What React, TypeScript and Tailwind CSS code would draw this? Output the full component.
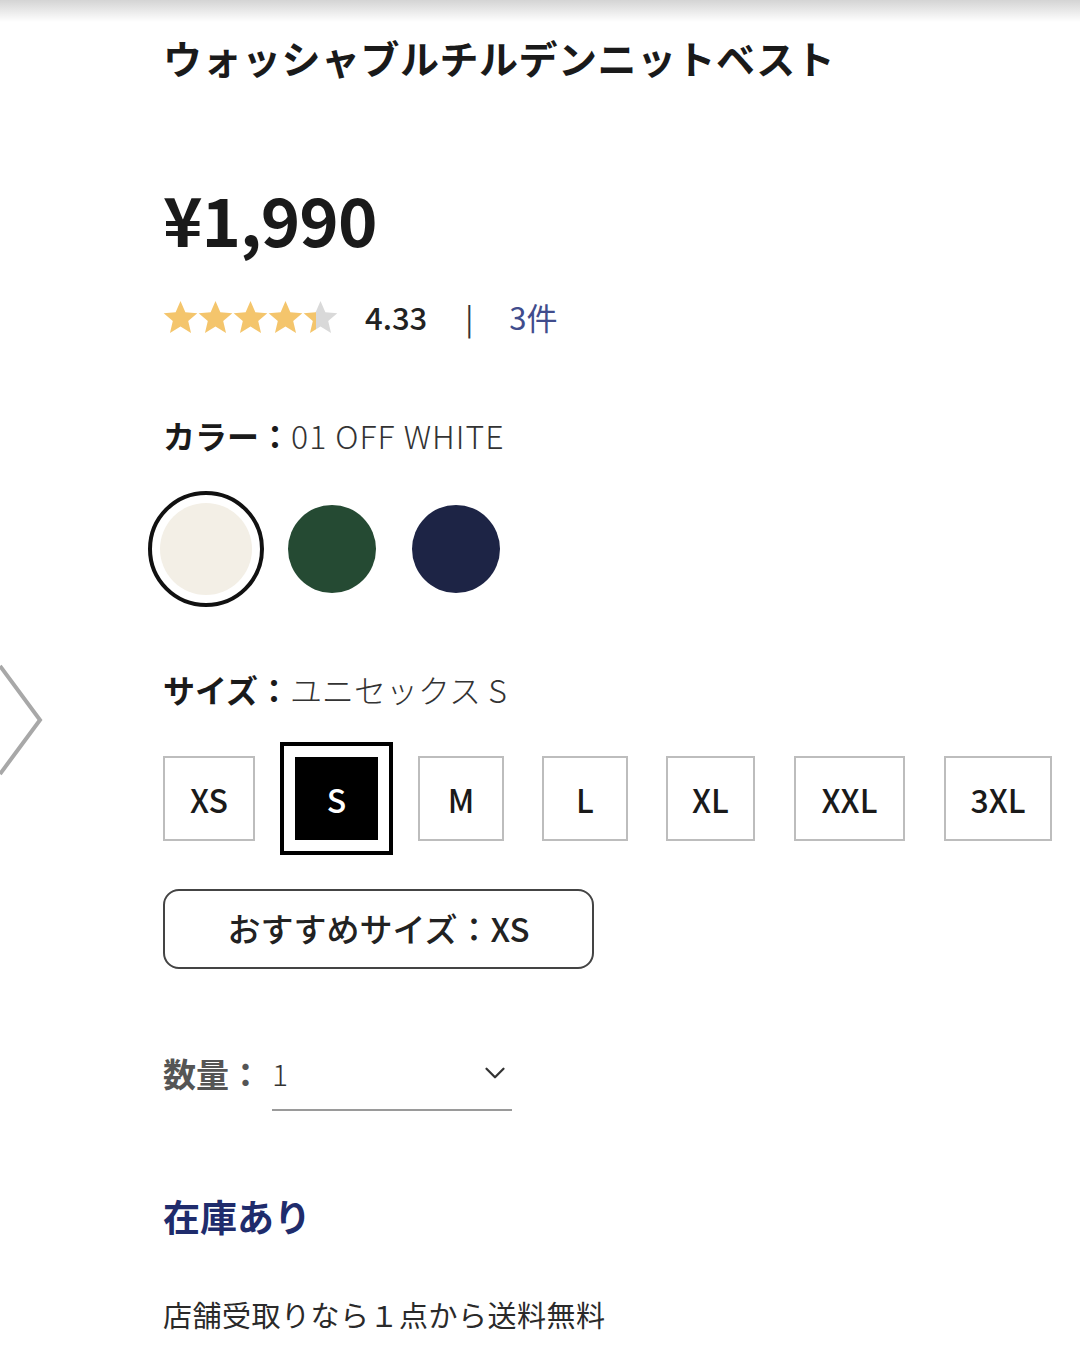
import { ChevronDown } from "lucide-react";

const jp = { fontFamily: '"Noto Sans CJK JP", "Noto Sans", sans-serif' };

const sizes = [
    { label: "XS", w: "w-[92px]", ml: "ml-0" },
    { label: "S", w: "w-[113px]", ml: "ml-[25px]", selected: true },
    { label: "M", w: "w-[86px]", ml: "ml-[25px]" },
    { label: "L", w: "w-[86px]", ml: "ml-[38px]" },
    { label: "XL", w: "w-[89px]", ml: "ml-[38px]" },
    { label: "XXL", w: "w-[111px]", ml: "ml-[39px]" },
    { label: "3XL", w: "w-[108px]", ml: "ml-[39px]" },
];

function Star({ fill }: { fill: number }) {
    const id = `g${Math.round(fill * 100)}`;
    return (
        <svg width="35" height="33" viewBox="1 1 22 21">
            <defs>
                <linearGradient id={id}>
                    <stop offset={fill} stopColor="#f4c56c" />
                    <stop offset={fill} stopColor="#d9d9d9" />
                </linearGradient>
            </defs>
            <path d="M12 1l3.1 7.2 7.6.6-5.8 5 1.8 7.6L12 17.3l-6.7 4.1 1.8-7.6-5.8-5 7.6-.6z" fill={`url(#${id})`} />
        </svg>
    );
}

export default function App() {
    return (
        <div className="relative w-[1080px] h-[1350px] bg-white overflow-hidden text-[#1a1a1a]" style={jp}>
            <div className="h-[22px] bg-gradient-to-b from-[#d4d4d4] to-white" />

            {/* left carousel arrow */}
            <svg className="absolute left-0 top-[662px]" width="46" height="116" viewBox="0 0 46 116">
                <path d="M0 4 L40 58 L0 112" fill="none" stroke="#a8a8a8" strokeWidth="4" />
            </svg>

            <div className="pl-[163px]">
                <h1 className="mt-[7px] text-[39px] leading-[56px] font-bold tracking-[0.5px]">ウォッシャブルチルデンニットベスト</h1>

                <div className="mt-[98px] text-[67px] leading-[70px] font-bold tracking-[-1px]">¥1,990</div>

                <div className="mt-[44px] flex items-center h-[40px]">
                    <div className="flex">
                        <Star fill={1} />
                        <Star fill={1} />
                        <Star fill={1} />
                        <Star fill={1} />
                        <Star fill={0.38} />
                    </div>
                    <span className="ml-[27px] text-[31px] font-medium text-[#222]">4.33</span>
                    <span className="ml-[38px] text-[30px] text-[#333]">|</span>
                    <span className="ml-[36px] text-[31px] text-[#404c8c]">3件</span>
                </div>

                <div className="mt-[76px] flex items-baseline text-[32px] leading-[44px]">
                    <span className="font-bold">カラー：</span>
                    <span className="text-[#333] font-light tracking-[1px]">01 OFF WHITE</span>
                </div>

                <div className="mt-[34px] -ml-[15px] flex items-center gap-[24px]">
                    <div className="w-[116px] h-[116px] rounded-full border-[4px] border-[#111] flex items-center justify-center">
                        <div className="w-[92px] h-[92px] rounded-full bg-[#f3efe6]" />
                    </div>
                    <div className="w-[88px] h-[88px] rounded-full bg-[#254a33]" />
                    <div className="ml-[12px] w-[88px] h-[88px] rounded-full bg-[#1d2445]" />
                </div>

                <div className="mt-[60px] flex items-baseline text-[32px] leading-[44px]">
                    <span className="font-bold">サイズ：</span>
                    <span className="text-[#333] font-light">ユニセックス S</span>
                </div>

                <div className="mt-[31px] flex items-center">
                    {sizes.map((s) =>
                        s.selected ? (
                            <div key={s.label} className={`${s.ml} w-[113px] h-[113px] border-[4px] border-black p-[11px]`}>
                                <div className="w-full h-full bg-black flex items-center justify-center text-white text-[32px] font-medium">
                                    {s.label}
                                </div>
                            </div>
                        ) : (
                            <div
                                key={s.label}
                                className={`${s.ml} ${s.w} h-[85px] border-2 border-[#bdbdbd] flex items-center justify-center text-[32px] font-medium text-[#1a1a1a]`}
                            >
                                {s.label}
                            </div>
                        )
                    )}
                </div>

                <div className="mt-[34px] w-[431px] h-[80px] rounded-[16px] border-2 border-[#444] flex items-center justify-center text-[33px] font-medium text-[#222]">
                    おすすめサイズ：XS
                </div>

                <div className="mt-[82px] flex items-start">
                    <span className="text-[33px] leading-[44px] font-bold text-[#555]">数量：</span>
                    <div className="ml-[10px] w-[240px] h-[60px] border-b-2 border-[#9a9a9a]">
                        <div className="h-[44px] flex items-center justify-between">
                            <span className="text-[30px] font-light text-[#333]">1</span>
                            <ChevronDown className="w-[34px] h-[34px] text-[#333]" strokeWidth={1.6} />
                        </div>
                    </div>
                </div>

                <div className="mt-[80px] text-[37px] leading-[50px] font-bold text-[#1f2c6c]">在庫あり</div>

                <div className="mt-[53px] text-[29px] leading-[40px] tracking-[0.5px] text-[#2a2a2a]">店舗受取りなら１点から送料無料</div>
            </div>
        </div>
    );
}
